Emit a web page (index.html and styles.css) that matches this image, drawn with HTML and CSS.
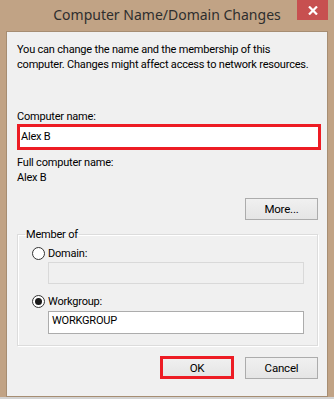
FILE: index.html
```html
<!DOCTYPE html>
<html lang="en">

<head>
    <meta charset="UTF-8">
    <title>Computer Name/Domain Changes</title>
    <link rel="stylesheet" href="styles.css">
</head>

<body>
    <div class="window">
        <div class="titlebar">
            <span></span>
            <span class="title">Computer Name/Domain Changes</span>
            <button class="close">
                <svg width="10" height="9" viewBox="0 0 10 9">
                    <path d="M1 0.5 L9 8.5 M9 0.5 L1 8.5" stroke="#fff" stroke-width="2.2" fill="none"/>
                </svg>
            </button>
        </div>

        <div class="content">
            <p class="intro">You can change the name and the membership of this<br>computer. Changes might affect access to network resources.</p>

            <div class="label label-name">Computer name:</div>
            <div class="text-box highlight">Alex B</div>

            <div class="label label-full">Full computer name:</div>
            <div class="label">Alex B</div>

            <div class="more-row">
                <button class="button">More...</button>
            </div>

            <fieldset class="group">
                <legend>Member of</legend>
                <div class="radio-row">
                    <span class="radio"></span>
                    <span>Domain:</span>
                </div>
                <div class="text-box field disabled"></div>
                <div class="radio-row radio-row-second">
                    <span class="radio checked"></span>
                    <span>Workgroup:</span>
                </div>
                <div class="text-box field">WORKGROUP</div>
            </fieldset>

            <div class="actions">
                <button class="button button-ok">OK</button>
                <button class="button">Cancel</button>
            </div>
        </div>
    </div>
</body>

</html>
```

FILE: styles.css
```css
body,
html {
    margin: 0;
    padding: 0;
    height: 100%;
    overflow: hidden;
    background-color: #d3d3d3;
}

.window {
    width: 334px;
    height: 397px;
    background-color: #c1a385;
    box-sizing: border-box;
    display: flex;
    flex-direction: column;
    font-family: Roboto, "Liberation Sans", Arial, sans-serif;
    font-size: 11px;
    letter-spacing: -0.2px;
    color: #000;
}

.titlebar {
    height: 31px;
    display: grid;
    grid-template-columns: 1fr auto 1fr;
    padding-right: 6px;
    letter-spacing: 0;
}

.title {
    font-family: "Noto Sans", "Open Sans", sans-serif;
    font-size: 14px;
    color: #2e2e2e;
    line-height: 30px;
    padding-left: 6px;
}

.close {
    justify-self: end;
    width: 31px;
    height: 20px;
    border: none;
    padding: 0;
    background-color: #c75050;
    display: flex;
    align-items: center;
    justify-content: center;
}

.content {
    flex: 1;
    margin: 0 6px;
    border: 1px solid #a68d72;
    background-color: #f0f0f0;
    padding: 10px 9px 0 10px;
    display: flex;
    flex-direction: column;
}

.intro {
    margin: 0;
    line-height: 15px;
    white-space: nowrap;
}

.label {
    line-height: 15px;
    height: 15px;
}

.label-name {
    margin-top: 37px;
}

.label-full {
    margin-top: 5px;
}

.text-box {
    box-sizing: border-box;
    line-height: 18px;
    background-color: #fff;
    border: 1px solid #acacac;
    padding-left: 3px;
}

.highlight {
    height: 26px;
    margin-right: -3px;
    border: 3px solid #ed1c24;
    line-height: 20px;
    padding-left: 1px;
}

.more-row {
    display: flex;
    justify-content: flex-end;
    margin-top: 13px;
}

.button {
    width: 73px;
    height: 22px;
    box-sizing: border-box;
    border: 1px solid #acacac;
    background: linear-gradient(#f0f0f0, #e5e5e5);
    font-family: inherit;
    font-size: 11.5px;
    letter-spacing: inherit;
    color: #000;
    padding: 0;
}

.group {
    margin: 7px 0 0 0;
    border: 1px solid #dcdcdc;
    box-shadow: inset 1px 1px 0 #fff, 1px 1px 0 #fff;
    padding: 4px 13px 11px 7px;
    min-width: 0;
}

.group legend {
    padding: 0 1px;
    line-height: 15px;
}

.radio-row {
    display: flex;
    align-items: center;
    gap: 3px;
    height: 15px;
    margin-left: 7px;
}

.radio-row-second {
    margin-top: 10px;
}

.radio {
    width: 11px;
    height: 11px;
    border: 1px solid #333;
    border-radius: 50%;
    background-color: #fff;
    display: flex;
    align-items: center;
    justify-content: center;
}

.radio.checked::after {
    content: "";
    width: 7px;
    height: 7px;
    border-radius: 50%;
    background-color: #1a1a1a;
}

.field {
    margin: 1px 0 0 23px;
    height: 22px;
}

.field.disabled {
    background-color: #f0f0f0;
    border-color: #d9d9d9;
}

.radio-row-second + .field {
    margin-top: 2px;
    height: 23px;
}

.actions {
    display: flex;
    justify-content: flex-end;
    align-items: center;
    gap: 8px;
    margin-top: 10px;
}

.button-ok {
    width: 74px;
    height: 23px;
    margin-right: 3px;
    border: 3px solid #ed1c24;
}
```
